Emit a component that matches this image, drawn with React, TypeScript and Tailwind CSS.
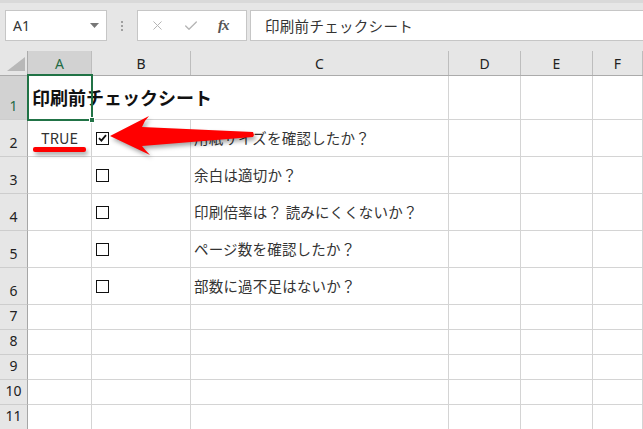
import { Check, X } from "lucide-react";

const cols = ["A", "B", "C", "D", "E", "F"];

type Row = {
  n: number;
  flag?: string;
  box?: "on" | "off";
  text?: string;
};

const rows: Row[] = [
  { n: 1 },
  { n: 2, flag: "TRUE", box: "on", text: "用紙サイズを確認したか？" },
  { n: 3, box: "off", text: "余白は適切か？" },
  { n: 4, box: "off", text: "印刷倍率は？ 読みにくくないか？" },
  { n: 5, box: "off", text: "ページ数を確認したか？" },
  { n: 6, box: "off", text: "部数に過不足はないか？" },
  { n: 7 },
  { n: 8 },
  { n: 9 },
  { n: 10 },
  { n: 11 },
];

const cjk = "font-['Noto_Sans_CJK_JP',sans-serif]";
const cell = "border-r border-b border-[#d4d4d4] bg-white";

function CheckBox({ on }: { on: boolean }) {
  return (
    <div className="ml-[4px] w-[13px] h-[13px] border border-[#111] bg-white flex items-center justify-center">
      {on && (
        <svg width="9" height="8" viewBox="0 0 9 8">
          <path d="M1 4.2 L3.4 6.6 L8 1.2" fill="none" stroke="#111" strokeWidth="1.8" />
        </svg>
      )}
    </div>
  );
}

function Toolbar() {
  return (
    <div className="h-[51px] bg-[#e6e6e6] flex flex-col">
      <div className="h-[3px] bg-[#d9d9d9]" />
      <div className="flex items-start pt-[7px] pl-[5px] gap-0">
        {/* name box */}
        <div className="w-[102px] h-[31px] bg-white border border-[#c6c6c6] flex items-center justify-between pl-[7px] pr-[7px]">
          <span className="text-[14px] text-[#333] font-['Noto_Sans',sans-serif]">A1</span>
          <svg width="9" height="5" viewBox="0 0 9 5">
            <path d="M0 0 H9 L4.5 5 Z" fill="#777" />
          </svg>
        </div>
        <div className="w-[30px] h-[31px] flex flex-col items-center justify-center gap-[2px]">
          <div className="w-[2px] h-[2px] bg-[#a0a0a0]" />
          <div className="w-[2px] h-[2px] bg-[#a0a0a0]" />
          <div className="w-[2px] h-[2px] bg-[#a0a0a0]" />
        </div>
        {/* formula buttons */}
        <div className="w-[110px] h-[31px] bg-white border border-[#c6c6c6] flex items-center pl-[12px]">
          <X className="w-[15px] h-[15px] text-[#b5b5b5]" strokeWidth={1.6} />
          <Check className="w-[16px] h-[16px] text-[#b5b5b5] ml-[18px]" strokeWidth={2} />
          <span className="ml-[19px] text-[15px] italic font-bold text-[#555] font-['Liberation_Serif',serif] tracking-[-1px]">
            fx
          </span>
        </div>
        <div className="ml-[3px] flex-1 h-[31px] bg-white border border-r-0 border-[#c6c6c6] flex items-center pl-[14px]">
          <span className={`text-[14.5px] text-[#333] tracking-[0.3px] ${cjk}`}>印刷前チェックシート</span>
        </div>
      </div>
    </div>
  );
}

function Sheet() {
  return (
    <div className="relative">
      <div className="grid grid-cols-[28px_64px_99px_258px_72px_72px_1fr] grid-rows-[25px_44px_37px_37px_37px_37px_37px_25px_25px_25px_25px_25px]">
        {/* header row */}
        <div className="bg-[#e6e6e6] border-r border-b border-[#ababab] relative">
          <svg className="absolute left-[7px] top-[6px]" width="18" height="14" viewBox="0 0 18 14">
            <path d="M18 0 V14 H0 Z" fill="#b8b8b8" />
          </svg>
        </div>
        {cols.map((c) => (
          <div
            key={c}
            className={`border-b border-[#ababab] flex items-center justify-center text-[14px] font-['Noto_Sans',sans-serif] ${
              c === "A" ? "bg-[#d2d2d2] text-[#1f6b45]" : "bg-[#e6e6e6] text-[#222]"
            }`}
          >
            <div className="flex-1 text-center">{c}</div>
            <div className="w-px h-full bg-[#bdbdbd]" />
          </div>
        ))}

        {rows.map((r) => (
          <div key={r.n} className="contents">
            <div
              className={`border-r border-b border-r-[#a6a6a6] border-b-[#cdcdcd] flex items-end justify-center pb-[3px] text-[14px] font-['Noto_Sans',sans-serif] ${
                r.n === 1 ? "bg-[#d2d2d2] text-[#1f6b45]" : "bg-[#e6e6e6] text-[#222]"
              }`}
            >
              {r.n}
            </div>
            {/* A */}
            <div className={`${cell} flex items-center ${r.n === 1 ? "relative z-10" : "justify-center"}`}>
              {r.n === 1 && (
                <span className={`pl-[4px] whitespace-nowrap text-[18px] font-bold text-[#111] ${cjk}`}>
                  印刷前チェックシート
                </span>
              )}
              {r.flag && <span className={`text-[14.5px] text-[#333] ${cjk}`}>{r.flag}</span>}
            </div>
            {/* B */}
            <div className={`${r.n === 1 ? "border-b border-[#d4d4d4]" : cell} flex items-center`}>
              {r.box && <CheckBox on={r.box === "on"} />}
            </div>
            {/* C */}
            <div className={`${r.n === 1 ? "border-r border-b border-[#d4d4d4]" : cell} flex items-center pl-[3px]`}>
              {r.text && (
                <span className={`whitespace-nowrap text-[14.5px] text-[#333] tracking-[0.2px] ${cjk}`}>{r.text}</span>
              )}
            </div>
            <div className={cell} />
            <div className={cell} />
            <div className={cell} />
          </div>
        ))}
      </div>

      {/* selection A1 */}
      <div className="absolute left-[27px] top-[23px] w-[66px] h-[47px] border-2 border-[#217346] z-20 pointer-events-none" />
      <div className="absolute left-[89px] top-[66px] w-[6px] h-[6px] bg-[#217346] border border-white z-20" />
    </div>
  );
}

export default function App() {
  return (
    <div className="relative w-[643px] h-[429px] overflow-hidden bg-white">
      <Toolbar />
      <Sheet />

      {/* annotation: arrow + underline */}
      <svg
        className="absolute left-0 top-0 z-30 pointer-events-none drop-shadow-[2px_3px_2px_rgba(0,0,0,0.35)]"
        width="643"
        height="429"
        viewBox="0 0 643 429"
      >
        <path
          d="M110 136 L149 116 Q144 121 142 127 L253 132 L254 135 L253 137 L142 146 Q145 150 150 155 Z"
          fill="#ff0000"
        />
        <rect x="33" y="147" width="53" height="5" rx="2" fill="#ff0000" />
      </svg>
    </div>
  );
}
